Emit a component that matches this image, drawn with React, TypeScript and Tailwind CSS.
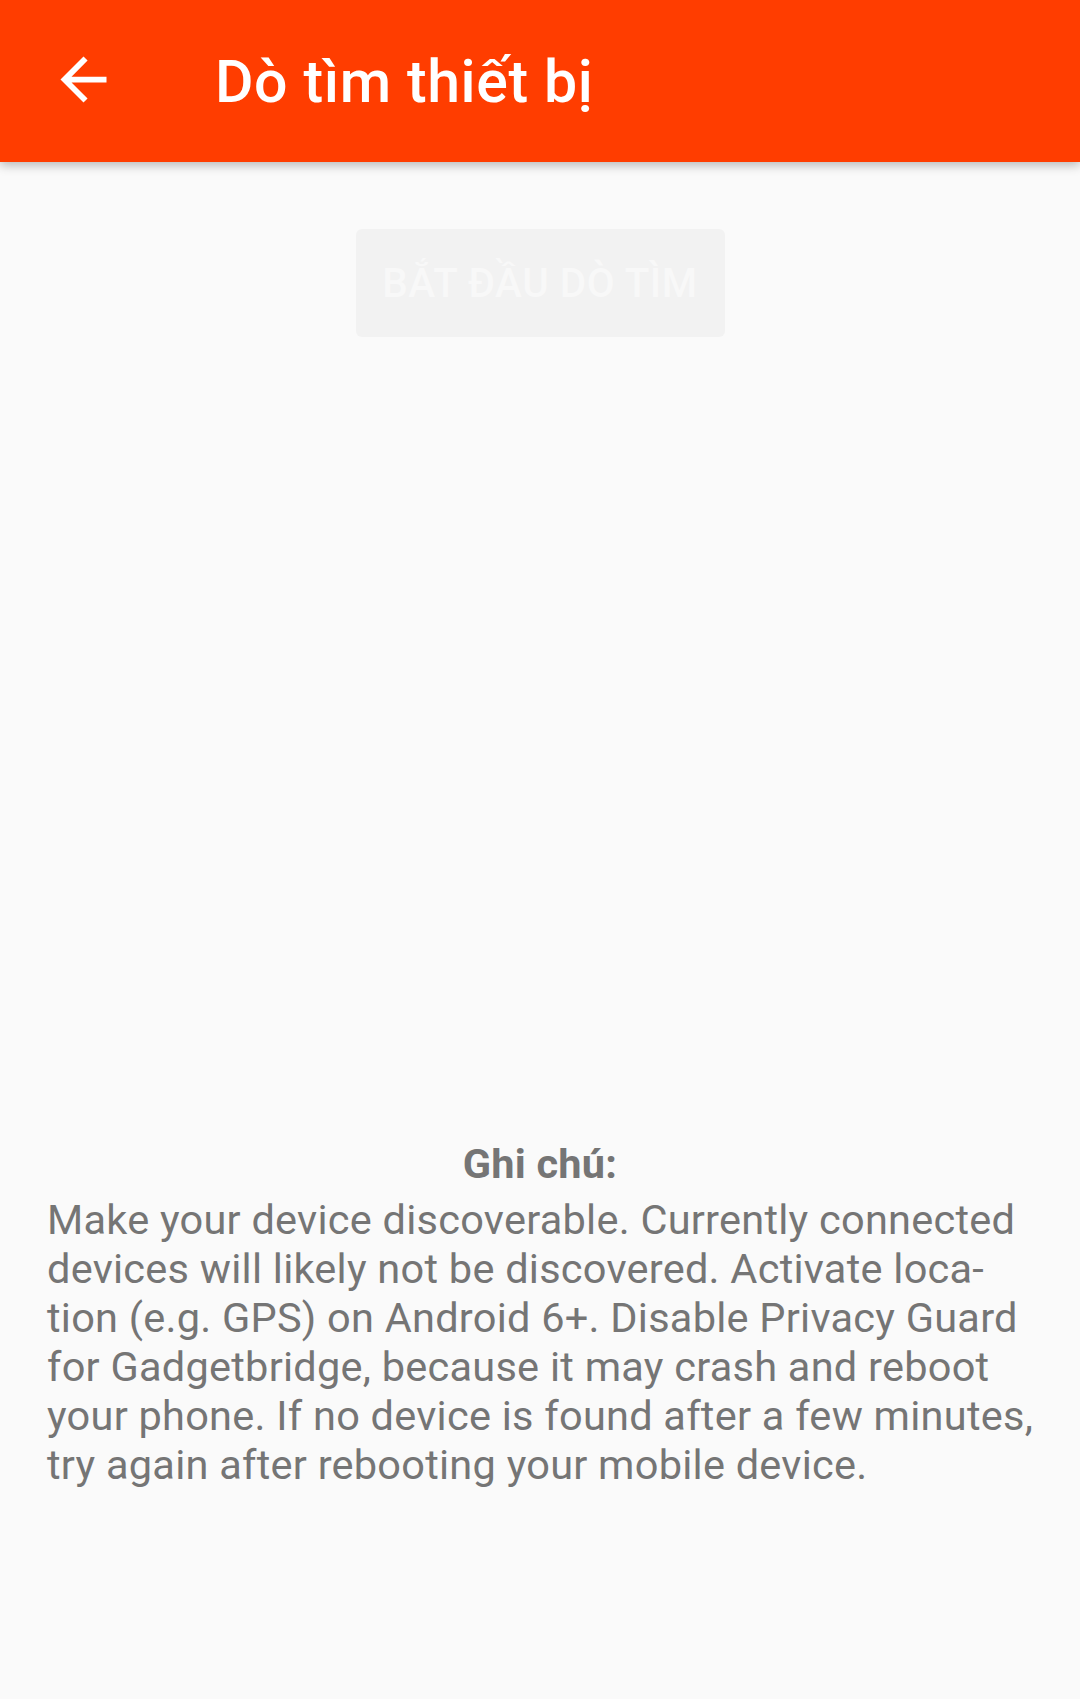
const noteLines = [
    "Make your device discoverable. Currently connected",
    "devices will likely not be discovered. Activate loca-",
    "tion (e.g. GPS) on Android 6+. Disable Privacy Guard",
    "for Gadgetbridge, because it may crash and reboot",
    "your phone. If no device is found after a few minutes,",
    "try again after rebooting your mobile device.",
]

function BackArrow() {
    return (
        <svg width="69" height="69" viewBox="0 0 24 24" fill="white">
            <path d="M20 11H7.83l5.59-5.59L12 4l-8 8 8 8 1.41-1.41L7.83 13H20v-2z" />
        </svg>
    )
}

export default function App() {
    return (
        <div className="min-h-[1699px] w-[1080px] bg-[#fafafa] font-['Roboto',sans-serif] flex flex-col">
            {/* toolbar */}
            <div className="relative z-10 h-[162px] bg-[#ff3d00] flex items-center pl-[49px] shadow-[0_3px_10px_rgba(0,0,0,0.28)]">
                <button className="mb-[4px] flex items-center">
                    <BackArrow />
                </button>
                <h1 className="ml-[97px] text-white text-[59px] tracking-[0.6px] font-medium leading-none">
                    Dò tìm thiết bị
                </h1>
            </div>

            {/* scan button */}
            <div className="flex justify-center pt-[67px]">
                <button
                    disabled
                    className="w-[369px] h-[108px] rounded-[6px] bg-[#f2f2f2] text-[#f8f8f8] text-[40.5px] font-medium tracking-[0.5px] flex items-center justify-center"
                >
                    BẮT ĐẦU DÒ TÌM
                </button>
            </div>

            {/* note */}
            <div className="mt-[802px] px-[47px] text-[#757575] text-[41.5px] tracking-[0.25px] leading-[49px]">
                <div className="text-center font-bold">Ghi chú:</div>
                <div className="mt-[7px]">
                    {noteLines.map((line, i) => (
                        <div key={i} className="whitespace-nowrap">
                            {line}
                        </div>
                    ))}
                </div>
            </div>
        </div>
    )
}
